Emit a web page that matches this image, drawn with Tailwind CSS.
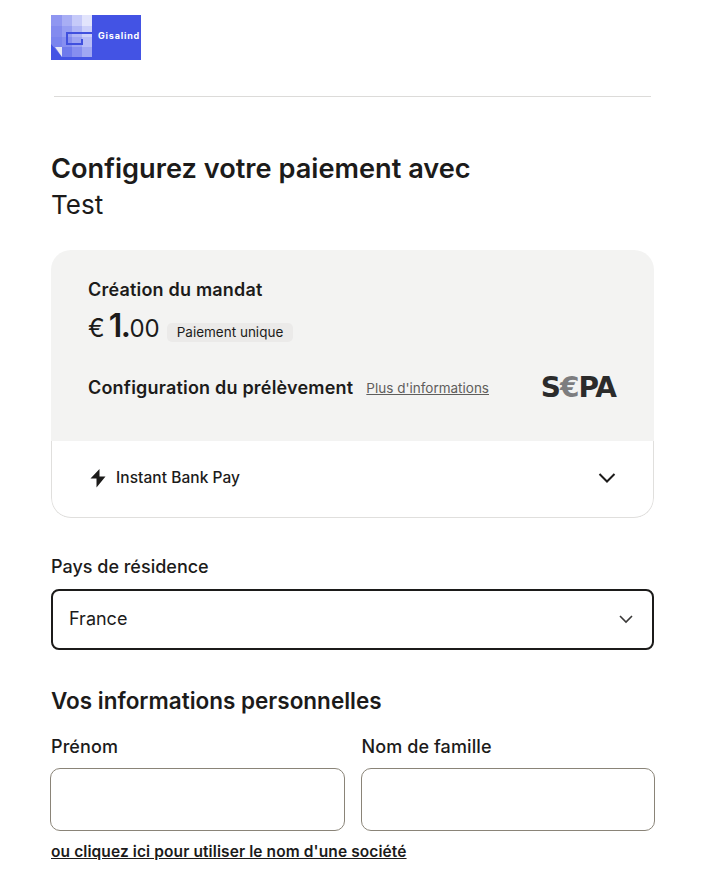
<!DOCTYPE html>
<html lang="fr">
<head>
    <meta charset="UTF-8">
    <meta name="viewport" content="width=device-width, initial-scale=1.0">
    <title>Configurez votre paiement</title>
    <script src="https://cdn.jsdelivr.net/npm/@tailwindcss/browser@4"></script>
</head>
<body class="bg-white text-[#1c1b1a] font-['Inter',sans-serif] h-[891px] overflow-hidden">
    <div class="pl-[51px] pr-[52px] pt-[15px]">
        <!-- Logo -->
        <div class="w-[90px] h-[45px] bg-[#4353e4] flex items-center relative overflow-hidden">
            <svg class="absolute left-0 top-0 blur-[0.4px]" width="90" height="45" viewBox="0 0 90 45">
                <rect x="0" y="0" width="11" height="11" fill="#8f96f1"/>
                <rect x="11" y="0" width="10" height="11" fill="#a8aef4"/>
                <rect x="21" y="0" width="10" height="11" fill="#c6caf9"/>
                <rect x="31" y="0" width="10" height="11" fill="#e2e4fc"/>
                <rect x="0" y="11" width="11" height="11" fill="#838bef"/>
                <rect x="11" y="11" width="10" height="11" fill="#969ef2"/>
                <rect x="21" y="11" width="10" height="11" fill="#b0b6f6"/>
                <rect x="31" y="11" width="10" height="11" fill="#ccd0fa"/>
                <rect x="0" y="22" width="11" height="10" fill="#7a84ee"/>
                <rect x="11" y="22" width="10" height="10" fill="#868ef0"/>
                <rect x="21" y="22" width="10" height="10" fill="#9da4f3"/>
                <rect x="31" y="22" width="10" height="10" fill="#b7bcf7"/>
                <rect x="0" y="32" width="11" height="10" fill="#6a75eb"/>
                <rect x="11" y="32" width="10" height="10" fill="#6f7aec"/>
                <rect x="21" y="32" width="10" height="10" fill="#868ef0"/>
                <rect x="31" y="32" width="10" height="10" fill="#a0a7f3"/>
                <path d="M41 18H16V29H31V24" fill="none" stroke="#4050de" stroke-width="2"/>
                <path d="M0 29L11 42H0Z" fill="#4353e4"/>
                <path d="M4 32H11V42Z" fill="#e6e7f5"/>
            </svg>
            <span class="absolute left-[47px] top-[14px] text-[9px] leading-[14px] font-bold tracking-[0.8px] text-white">Gisalind</span>
        </div>

        <div class="h-px bg-[#dcdbd9] mt-[36px] mx-[3px]"></div>

        <!-- Title -->
        <h1 class="mt-[54px] text-[27.2px] leading-[36px] font-semibold">Configurez votre paiement avec</h1>
        <p class="text-[26px] leading-[36px] font-normal">Test</p>

        <!-- Card -->
        <div class="mt-[27px] rounded-[20px] bg-white overflow-hidden">
            <div class="bg-[#f3f3f2] h-[191px] px-[37px] pt-[28px]">
                <p class="text-[18px] leading-[24px] font-semibold tracking-[0.2px]">Création du mandat</p>
                <div class="flex items-baseline mt-[8px] h-[32px]">
                    <span class="text-[25px] leading-[32px]">€</span>
                    <span class="text-[32px] leading-[32px] font-semibold ml-[4px] tracking-[-1.5px]">1.</span>
                    <span class="text-[24px] leading-[32px]">00</span>
                    <span class="ml-[7px] bg-[#ebeae9] rounded-[5px] px-[10px] h-[19px] text-[13.5px] leading-[19px]">Paiement unique</span>
                </div>
                <div class="flex items-center justify-between mt-[30px] h-[32px]">
                    <div class="flex items-center">
                        <p class="text-[18px] leading-[24px] font-semibold tracking-[0.2px]">Configuration du prélèvement</p>
                        <a href="#" class="ml-[13px] text-[13.5px] leading-[18px] text-[#5f5e5c] underline">Plus d'informations</a>
                    </div>
                    <span class="mr-px text-[28px] leading-[32px] font-bold tracking-[-1px] text-[#2b2b2b] font-['DejaVu_Sans',sans-serif]">S<span class="text-[#7d7d7f]">€</span>PA</span>
                </div>
            </div>
            <div class="h-[77px] pb-[2px] px-[37px] flex items-center justify-between border-x border-b border-[#e0dfdd] rounded-b-[20px]">
                <div class="flex items-center">
                    <svg width="18" height="20" viewBox="0 0 18 20" class="mr-[9px]"><path d="M10.5 1L1.5 10.5H7.5L7.5 19.5L16.5 8.5H10.5Z" fill="#1c1b1a"/></svg>
                    <span class="text-[15.5px] leading-[20px] font-medium tracking-[0.05px]">Instant Bank Pay</span>
                </div>
                <svg width="18" height="12" viewBox="0 0 18 12"><path d="M1.5 2L9 9.5L16.5 2" fill="none" stroke="#1c1b1a" stroke-width="2"/></svg>
            </div>
        </div>

        <!-- Country -->
        <label class="block mt-[37px] text-[18px] leading-[24px] font-medium">Pays de résidence</label>
        <div class="mt-[10px] h-[61px] pb-[2px] border-2 border-[#1c1b1a] rounded-[8px] pl-[16px] pr-[18px] flex items-center justify-between">
            <span class="text-[18px] leading-[24px]">France</span>
            <svg width="16" height="10" viewBox="0 0 16 10"><path d="M2 2L8 8L14 2" fill="none" stroke="#3a3938" stroke-width="1.6"/></svg>
        </div>

        <!-- Personal info -->
        <h2 class="mt-[36px] text-[22.5px] leading-[30px] font-semibold">Vos informations personnelles</h2>
        <div class="grid grid-cols-2 gap-[16px] mt-[19px] -mx-px">
            <div>
                <label class="block ml-px text-[18px] leading-[24px] font-medium tracking-[0.1px]">Prénom</label>
                <div class="mt-[9px] h-[63px] border border-[#8a8478] rounded-[10px]"></div>
            </div>
            <div>
                <label class="block ml-px text-[18px] leading-[24px] font-medium tracking-[0.1px]">Nom de famille</label>
                <div class="mt-[9px] h-[63px] border border-[#8a8478] rounded-[10px]"></div>
            </div>
        </div>
        <a href="#" class="block mt-[11px] text-[15.5px] leading-[20px] font-semibold tracking-[0.1px] underline">ou cliquez ici pour utiliser le nom d'une société</a>
    </div>
</body>
</html>
